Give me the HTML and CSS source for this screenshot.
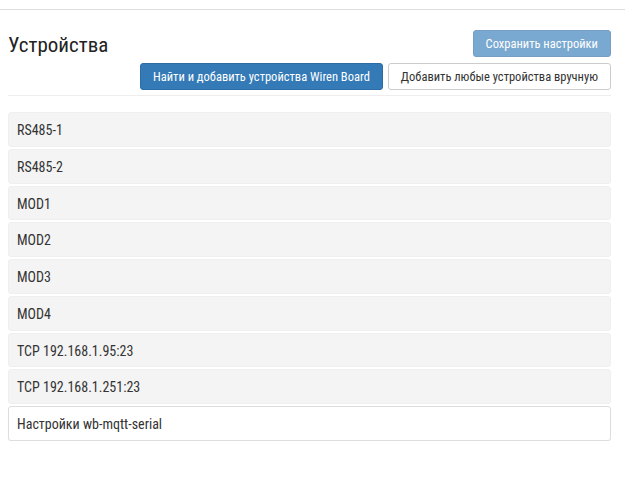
FILE: index.html
```html
<!DOCTYPE html>
<html lang="ru">
<head>
  <meta charset="UTF-8" />
  <meta name="viewport" content="width=device-width, initial-scale=1.0" />
  <title>Устройства</title>
  <link rel="stylesheet" href="styles.css">
</head>
<body>
  <div class="topbar"></div>
  <div class="page">
    <div class="page-header">
      <h1>Устройства</h1>
      <div class="actions">
        <button class="btn btn-primary" disabled>Сохранить настройки</button>
        <div class="actions-row">
          <button class="btn btn-primary">Найти и добавить устройства Wiren Board</button>
          <button class="btn btn-default">Добавить любые устройства вручную</button>
        </div>
      </div>
    </div>

    <div class="ports">
      <div class="port">RS485-1</div>
      <div class="port">RS485-2</div>
      <div class="port">MOD1</div>
      <div class="port">MOD2</div>
      <div class="port">MOD3</div>
      <div class="port">MOD4</div>
      <div class="port">TCP 192.168.1.95:23</div>
      <div class="port">TCP 192.168.1.251:23</div>
      <div class="port port-settings">Настройки wb-mqtt-serial</div>
    </div>
  </div>
</body>
</html>
```

FILE: styles.css
```css
body {
  margin: 0;
  font-family: Roboto, "Liberation Sans Narrow", "Liberation Sans", sans-serif;
  font-stretch: 80%;
  font-size: 14px;
  color: #333;
  background: #fff;
}
.topbar {
  height: 9px;
  border-bottom: 1px solid #ddd;
}
.page {
  padding: 0 14px 0 8px;
}
.page-header {
  display: flex;
  justify-content: space-between;
  align-items: flex-start;
  padding: 20px 0 5px;
  border-bottom: 1px solid #eee;
}
h1 {
  margin: 0;
  padding-top: 3px;
  font-size: 21px;
  font-stretch: 86%;
  font-weight: 400;
  color: #222;
}
.actions {
  display: flex;
  flex-direction: column;
  align-items: flex-end;
  gap: 6px;
}
.actions-row {
  display: flex;
  gap: 5px;
}
.btn {
  font-family: inherit;
  font-stretch: 82%;
  font-size: 12.5px;
  height: 27px;
  padding: 0 12px;
  white-space: nowrap;
  border: 1px solid transparent;
  border-radius: 3px;
  cursor: pointer;
}
.btn-primary {
  background-color: #337ab7;
  border-color: #2e6da4;
  color: #fff;
}
.btn-primary:disabled {
  opacity: 0.65;
  cursor: not-allowed;
}
.btn-default {
  background-color: #fff;
  border-color: #ccc;
  color: #333;
}
.ports {
  display: flex;
  flex-direction: column;
  gap: 2px;
  margin-top: 16px;
}
.port {
  height: 34.75px;
  line-height: 34px;
  padding: 0 8px;
  background: #f4f4f4;
  border: 1px solid #efefef;
  border-radius: 3px;
  box-sizing: border-box;
}
.port-settings {
  background: #fff;
  border-color: #ddd;
  box-shadow: 0 1px 1px rgba(0, 0, 0, 0.05);
}
```
